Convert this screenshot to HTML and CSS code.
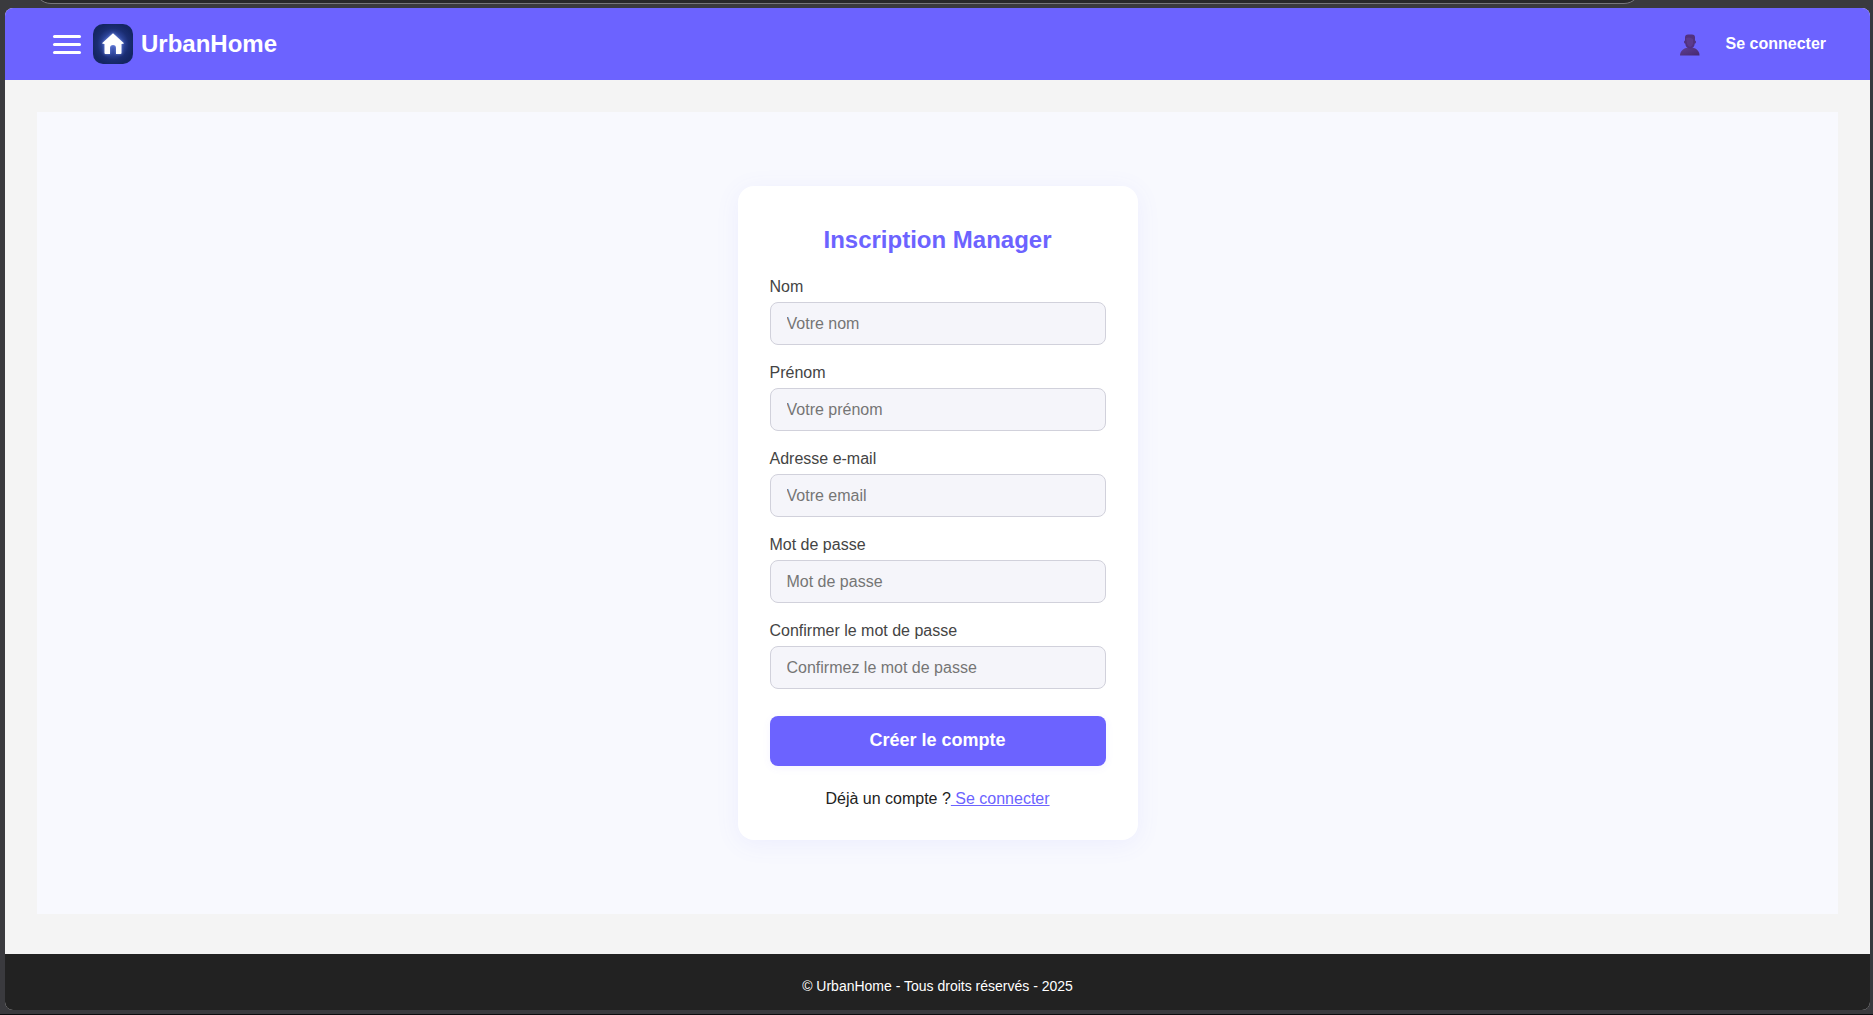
FILE: index.html
```html
<!DOCTYPE html>
<html lang="fr">
<head>
  <meta charset="utf-8">
  <meta name="viewport" content="width=device-width, initial-scale=1">
  <title>UrbanHome - Inscription Manager</title>
  <link rel="stylesheet" href="styles.css">
</head>
<body>
  <div class="toolbar"><div class="toolbar-field"></div></div>
  <div class="page">
    <header class="header">
      <div class="brand">
        <button class="menu" type="button" aria-label="Menu">
          <span class="menu-bar"></span><span class="menu-bar"></span><span class="menu-bar"></span>
        </button>
        <svg class="logo" viewBox="0 0 40 40" aria-hidden="true">
          <defs>
            <radialGradient id="glow" cx="20" cy="20" r="21" gradientUnits="userSpaceOnUse">
              <stop offset="0" stop-color="#5068c8"/>
              <stop offset=".45" stop-color="#3048a0"/>
              <stop offset=".75" stop-color="#1a2d72"/>
              <stop offset="1" stop-color="#142663"/>
            </radialGradient>
            <filter id="halo" x="-40%" y="-40%" width="180%" height="180%">
              <feGaussianBlur stdDeviation="1.5"/>
            </filter>
          </defs>
          <rect width="40" height="40" rx="10" fill="url(#glow)"/>
          <path d="M20 9 31 19.5H28.5V30H23V24a3 3 0 0 0-6 0v6H11.500V19.500H9Z" fill="#8fa6f5" opacity=".7" filter="url(#halo)"/>
          <path d="M20 9.200 31 19.200Q30.500 20 28.500 20V29Q28.500 30 27.500 30H23V24a3 3 0 0 0-6 0v6H12.500Q11.500 30 11.500 29V20Q9.500 20 9 19.200Z" fill="#fff"/>
        </svg>
        <span class="brand-name">UrbanHome</span>
      </div>
      <nav class="account">
        <svg class="avatar" viewBox="0 -2 20 24" aria-hidden="true">
          <defs>
            <linearGradient id="bust" x1="0" x2="1" y1="0" y2="1">
              <stop offset="0" stop-color="#5e3f93"/>
              <stop offset="1" stop-color="#46286f"/>
            </linearGradient>
          </defs>
          <path d="M0 21.500C0 17 3.500 14.500 7.500 13.800H12.500C16.500 14.500 19.500 17 19.500 21.500Z" fill="url(#bust)"/>
          <path d="M5 3.500Q5 .500 8 .500H12Q15 .500 15 3.500V6.500Q16 6.500 16 8T14.800 9.500Q14.200 14.500 10 14.500T5.200 9.500Q4 9.500 4 8T5 6.500Z" fill="#51317f"/>
          <path d="M6 4Q10 2.500 13 5V10Q12 13 10 13T7 10Z" fill="#5b3a8d"/>
        </svg>
        <a class="login" href="#">Se connecter</a>
      </nav>
    </header>
    <main class="main">
      <section class="stage">
        <form class="card">
          <h2 class="title">Inscription Manager</h2>
          <div class="fields">
            <div class="field"><label for="nom">Nom</label><input id="nom" type="text" placeholder="Votre nom"></div>
            <div class="field"><label for="prenom">Prénom</label><input id="prenom" type="text" placeholder="Votre prénom"></div>
            <div class="field"><label for="email">Adresse e-mail</label><input id="email" type="email" placeholder="Votre email"></div>
            <div class="field"><label for="passe">Mot de passe</label><input id="passe" type="password" placeholder="Mot de passe"></div>
            <div class="field"><label for="confirm">Confirmer le mot de passe</label><input id="confirm" type="password" placeholder="Confirmez le mot de passe"></div>
          </div>
          <button class="submit" type="button">Créer le compte</button>
          <p class="already">Déjà un compte ?<a href="#"> Se connecter</a></p>
        </form>
      </section>
    </main>
    <footer class="footer">© UrbanHome - Tous droits réservés - 2025</footer>
  </div>
</body>
</html>
```
FILE: styles.css
```css
* {
  box-sizing: border-box;
}

body {
  margin: 0;
  min-height: 100vh;
  display: flex;
  flex-direction: column;
  padding: 0 3px 4px 5px;
  background: #3a3a3e;
  border-bottom: 1px solid #0c0c0e;
  color: #222;
  font: 16px/20px "Liberation Sans", Arial, sans-serif;
}

.toolbar {
  display: flex;
  align-items: flex-end;
  height: 4px;
  margin: 0 229px 4px 29px;
  overflow: hidden;
}

.toolbar-field {
  flex: 1;
  height: 34px;
  border: 1px solid #77777b;
  border-radius: 17px;
  background: #28282a;
}

.page {
  flex: 1;
  display: flex;
  flex-direction: column;
  overflow: hidden;
  border-radius: 8px;
  background: #f4f4f4;
}

.header {
  display: flex;
  align-items: center;
  justify-content: space-between;
  padding: 16px 44px 16px 48px;
  background: #6c63ff;
  color: #fff;
}

.brand {
  display: flex;
  align-items: center;
}

.menu {
  display: flex;
  flex-direction: column;
  gap: 5px;
  width: 28px;
  margin-right: 12px;
  padding: 0;
  border: 0;
  background: none;
  cursor: pointer;
}

.menu-bar {
  width: 100%;
  height: 3px;
  border-radius: 2px;
  background: #fff;
}

.logo {
  width: 40px;
  height: 40px;
  margin-right: 8px;
}

.brand-name {
  font-size: 24px;
  font-weight: bold;
  line-height: 28px;
}

.account {
  display: flex;
  align-items: center;
  gap: 26px;
}

.avatar {
  width: 20px;
  height: 24px;
}

.login {
  color: #fff;
  font-weight: bold;
  text-decoration: none;
}

.main {
  flex: 1;
  display: flex;
  padding: 32px 32px 40px;
}

.stage {
  flex: 1;
  display: flex;
  align-items: center;
  justify-content: center;
  padding: 32px 16px;
  background: #f8f9fe;
}

.card {
  width: 100%;
  max-width: 400px;
  padding: 40px 32px 31px;
  border-radius: 16px;
  background: #fff;
  box-shadow: 0 4px 24px rgba(108, 99, 255, 0.08);
}

.title {
  margin: 0 0 23px;
  color: #6c63ff;
  font-size: 24px;
  line-height: 28px;
  text-align: center;
}

.fields {
  display: grid;
  gap: 18px;
}

.field {
  display: grid;
  gap: 5px;
}

.field label {
  color: #444;
}

.field input {
  width: 100%;
  height: 43px;
  padding: 0 16px;
  border: 1px solid #d1d1db;
  border-radius: 8px;
  background: #f5f5fa;
  color: #222;
  font: inherit;
}

.field input::placeholder {
  color: #757575;
}

.submit {
  display: block;
  width: 100%;
  height: 50px;
  margin: 27px 0 23px;
  padding: 0 0 2px;
  border: 0;
  border-radius: 8px;
  background: #6c63ff;
  box-shadow: 0 2px 8px rgba(108, 99, 255, 0.07);
  color: #fff;
  font: bold 18px/20px "Liberation Sans", Arial, sans-serif;
  cursor: pointer;
}

.already {
  margin: 0;
  text-align: center;
}

.already a {
  color: #6c63ff;
}

.footer {
  padding: 22px 16px 14px;
  background: #222;
  color: #fff;
  font-size: 14px;
  text-align: center;
}
```
